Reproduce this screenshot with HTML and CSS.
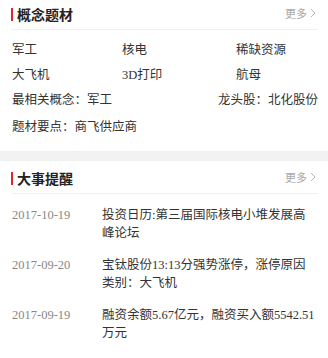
FILE: index.html
```html
<!DOCTYPE html>
<html lang="zh-CN">
<head>
  <meta charset="UTF-8" />
  <meta name="viewport" content="width=device-width, initial-scale=1.0"/>
  <title>个股资料</title>
  <link rel="stylesheet" href="styles.css">
</head>
<body>
  <div class="panel panel-first">
    <div class="panel-head">
      <span class="panel-title">概念题材</span>
      <a class="more" href="#">更多<svg width="6" height="10" viewBox="0 0 6 10"><path d="M1 1l4 4-4 4" fill="none" stroke="#b5b5b5" stroke-width="1"/></svg></a>
    </div>
    <div class="concepts">
      <div class="tags">
        <span>军工</span>
        <span>核电</span>
        <span>稀缺资源</span>
        <span>大飞机</span>
        <span>3D打印</span>
        <span>航母</span>
      </div>
      <div class="info-row">
        <span>最相关概念：军工</span>
        <span>龙头股：北化股份</span>
      </div>
      <div class="info-row info-last">
        <span>题材要点：商飞供应商</span>
      </div>
    </div>
  </div>

  <div class="panel panel-last">
    <div class="panel-head">
      <span class="panel-title">大事提醒</span>
      <a class="more" href="#">更多<svg width="6" height="10" viewBox="0 0 6 10"><path d="M1 1l4 4-4 4" fill="none" stroke="#b5b5b5" stroke-width="1"/></svg></a>
    </div>
    <ul class="events">
      <li>
        <span class="date">2017-10-19</span>
        <span class="desc">投资日历:第三届国际核电小堆发展高峰论坛</span>
      </li>
      <li>
        <span class="date">2017-09-20</span>
        <span class="desc">宝钛股份13:13分强势涨停，涨停原因类别：大飞机</span>
      </li>
      <li>
        <span class="date">2017-09-19</span>
        <span class="desc">融资余额5.67亿元，融资买入额5542.51万元</span>
      </li>
    </ul>
  </div>
</body>
</html>
```

FILE: styles.css
```css
body {
  margin: 0;
  background-color: #f2f2f2;
  font-family: "Liberation Serif", "Noto Sans CJK SC", serif;
  font-size: 12.5px;
  color: #333;
}

.panel {
  background: #fff;
  padding: 0 10px 0 12px;
  margin-bottom: 10px;
}

.panel-first {
  margin-top: -3px;
}

.panel-last {
  margin-bottom: 0;
}

.panel-head {
  height: 32px;
  display: flex;
  justify-content: space-between;
  align-items: center;
  border-bottom: 1px solid #f0f0f0;
}

.panel-title {
  font-family: "Noto Sans CJK SC", sans-serif;
  font-size: 14px;
  font-weight: bold;
  color: #222;
  border-left: 2px solid #e0242b;
  padding-left: 4px;
  line-height: 13px;
  margin-left: -1px;
  margin-top: 2px;
}

.more {
  font-family: "Noto Sans CJK SC", sans-serif;
  font-size: 11px;
  color: #a8a8a8;
  text-decoration: none;
  display: flex;
  align-items: center;
  gap: 3px;
  margin-right: 2px;
}

.concepts {
  padding: 8px 0 11px;
}

.tags {
  display: grid;
  grid-template-columns: 110px 114px 1fr;
}

.tags span,
.info-row {
  line-height: 25px;
}

.info-row {
  display: flex;
  justify-content: space-between;
}

.info-last {
  margin-top: 2px;
}

.events {
  list-style: none;
  margin: 0;
  padding: 0 0 24px;
}

.events li {
  display: flex;
  padding: 12px 0 2px;
  line-height: 18px;
}

.date {
  width: 90px;
  flex-shrink: 0;
  color: #888;
}

.desc {
  width: 214px;
}
```
